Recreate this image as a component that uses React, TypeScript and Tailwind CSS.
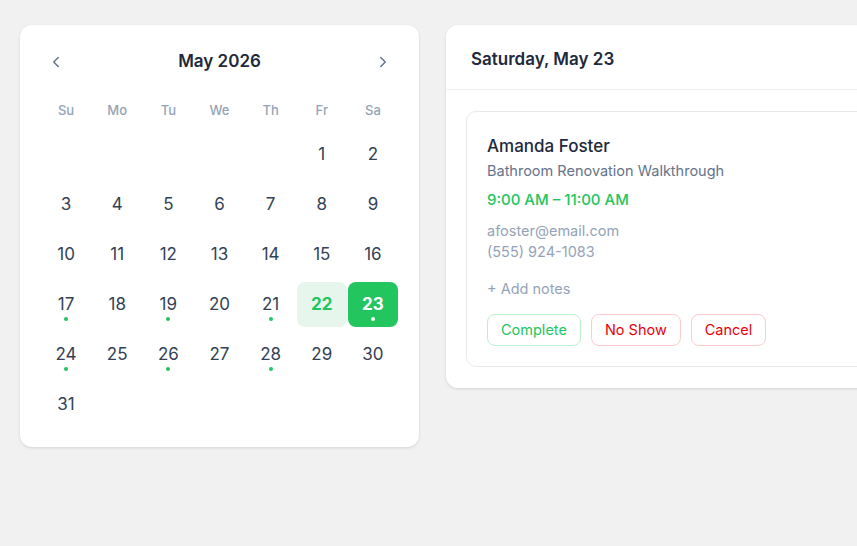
import React from "react";

const days = ["Su", "Mo", "Tu", "We", "Th", "Fr", "Sa"];
const dotted = new Set([17, 19, 21, 23, 24, 26, 28]);

function Chevron({ dir }: { dir: "l" | "r" }) {
  return (
    <svg width="18" height="18" viewBox="0 0 24 24" fill="none" stroke="#64748b" strokeWidth="2" strokeLinecap="round" strokeLinejoin="round">
      {dir === "l" ? <path d="M15 18l-6-6 6-6" /> : <path d="M9 18l6-6-6-6" />}
    </svg>
  );
}

export default function App() {
  const cells: (number | null)[] = [null, null, null, null, null];
  for (let i = 1; i <= 31; i++) cells.push(i);
  return (
    <div
      className="w-[857px] h-[546px] overflow-hidden bg-[#f1f1f1] flex items-start gap-[27px] pl-[20px] pt-[25px]"
      style={{ fontFamily: "Inter, 'Noto Sans', sans-serif" }}
    >
      <div className="w-[399px] shrink-0 bg-white rounded-[12px] shadow-[0_1px_3px_rgba(0,0,0,0.12)] px-[21px] pt-[23px] pb-[20px]">
        <div className="flex items-center justify-between px-[6px] h-[28px]">
          <Chevron dir="l" />
          <div className="text-[17px] font-semibold text-[#1e293b]">May 2026</div>
          <Chevron dir="r" />
        </div>
        <div className="grid grid-cols-7 gap-x-px mt-[25px]">
          {days.map((d) => (
            <div key={d} className="h-[20px] flex items-center justify-center text-[13px] font-medium text-[#94a3b8]">
              {d}
            </div>
          ))}
        </div>
        <div className="grid grid-cols-7 gap-x-px gap-y-[5px] mt-[11px]">
          {cells.map((c, i) => {
            if (c === null) return <div key={i} className="h-[45px]" />;
            const sel = c === 23;
            const today = c === 22;
            return (
              <div
                key={i}
                className={
                  "relative h-[45px] flex items-center justify-center rounded-[8px] text-[17px] " +
                  (sel
                    ? "bg-[#22c55e] text-white font-bold"
                    : today
                    ? "bg-[#e7f6ec] text-[#22c55e] font-bold"
                    : "text-[#334155]")
                }
              >
                {c}
                {dotted.has(c) && (
                  <span
                    className={
                      "absolute bottom-[6px] left-1/2 -translate-x-1/2 w-[4px] h-[4px] rounded-full " +
                      (sel ? "bg-white" : "bg-[#22c55e]")
                    }
                  />
                )}
              </div>
            );
          })}
        </div>
      </div>

      <div className="w-[460px] shrink-0 bg-white rounded-[12px] shadow-[0_1px_3px_rgba(0,0,0,0.12)]">
        <div className="h-[65px] flex items-center px-[25px] pt-[6px] border-b border-[#f0f0f0]">
          <div className="text-[17px] font-semibold text-[#1e293b]">Saturday, May 23</div>
        </div>
        <div className="px-[20px] pt-[21px] pb-[21px]">
          <div className="border border-[#e8e8e8] rounded-[10px] px-[20px] pt-[22px] pb-[20px]">
            <div className="text-[17px] font-medium text-[#1e293b] leading-[24px]">Amanda Foster</div>
            <div className="text-[14.5px] text-[#64748b] leading-[20px] mt-[3px]">Bathroom Renovation Walkthrough</div>
            <div className="text-[15px] font-medium text-[#22c55e] leading-[20px] mt-[9px]">9:00 AM – 11:00 AM</div>
            <div className="text-[14.5px] text-[#94a3b8] leading-[21px] mt-[10px]">afoster@email.com</div>
            <div className="text-[14.5px] text-[#94a3b8] leading-[21px] mt-0">(555) 924-1083</div>
            <div className="text-[14.5px] text-[#94a3b8] leading-[20px] mt-[17px]">+ Add notes</div>
            <div className="flex gap-[10px] mt-[15px]">
              <button className="h-[32px] px-[13px] rounded-[8px] border border-[#bbf0cc] text-[14.5px] text-[#22c55e]">Complete</button>
              <button className="h-[32px] px-[13px] rounded-[8px] border border-[#fecaca] text-[14.5px] text-[#e7000b]">No Show</button>
              <button className="h-[32px] px-[13px] rounded-[8px] border border-[#fecaca] text-[14.5px] text-[#e7000b]">Cancel</button>
            </div>
          </div>
        </div>
      </div>
    </div>
  );
}
